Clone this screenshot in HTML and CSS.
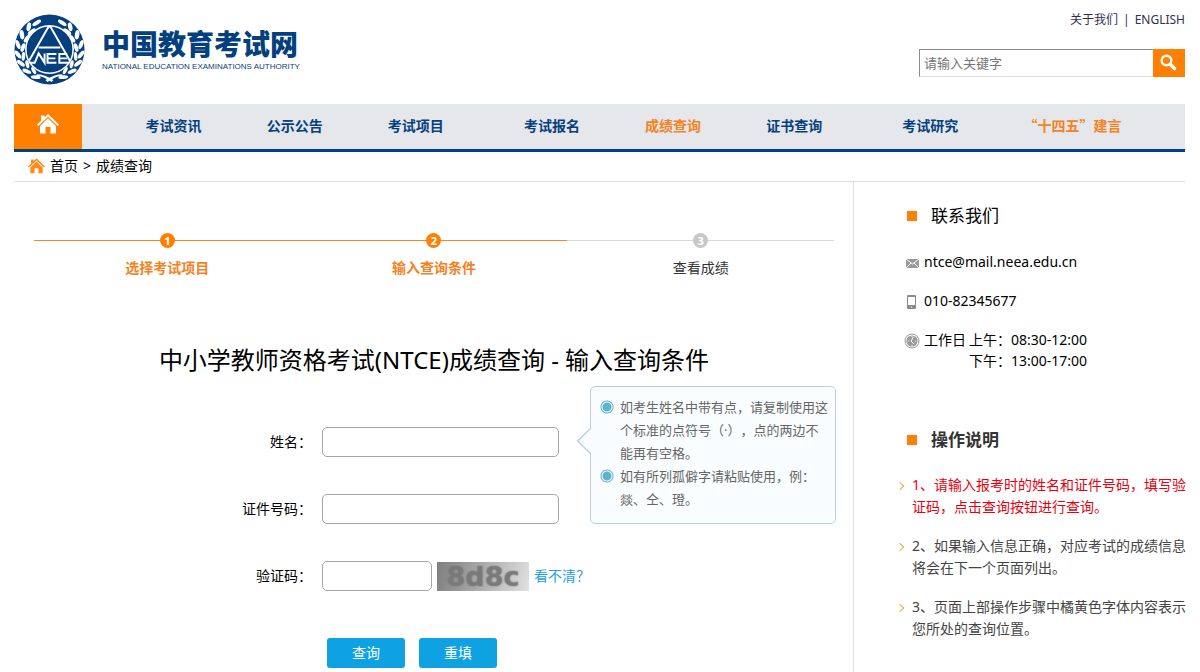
FILE: index.html
```html
<!DOCTYPE html>
<html lang="zh-CN">
<head>
<meta charset="utf-8">
<meta name="viewport" content="width=device-width, initial-scale=1">
<title>成绩查询 - 中国教育考试网</title>
<link rel="stylesheet" href="styles.css">
</head>
<body>
<header class="header">
  <a class="brand" href="#">
    <svg class="emblem" viewBox="0 0 72 72" aria-hidden="true">
      <defs>
        <g id="branch" fill="#fff">
          <ellipse cx="23" cy="9" rx="5" ry="2" transform="rotate(-32 23 9)"/>
          <ellipse cx="15" cy="13" rx="2.200" ry="4.500" transform="rotate(12 15 13)"/>
          <ellipse cx="18" cy="18" rx="4.800" ry="2" transform="rotate(-38 18 18)"/>
          <ellipse cx="8" cy="21" rx="2.300" ry="4.800" transform="rotate(-8 8 21)"/>
          <ellipse cx="13" cy="25" rx="4.500" ry="2" transform="rotate(-55 13 25)"/>
          <ellipse cx="4" cy="31" rx="2" ry="4.800" transform="rotate(-22 4 31)"/>
          <ellipse cx="9" cy="34" rx="2" ry="4.500" transform="rotate(18 9 34)"/>
          <ellipse cx="4" cy="41" rx="2" ry="4.800" transform="rotate(-38 4 41)"/>
          <ellipse cx="9.500" cy="43" rx="1.800" ry="4.500" transform="rotate(4 9.500 43)"/>
          <ellipse cx="7" cy="50" rx="2" ry="4.800" transform="rotate(-52 7 50)"/>
          <ellipse cx="13.500" cy="51" rx="1.800" ry="4.200" transform="rotate(-14 13.500 51)"/>
          <ellipse cx="13" cy="58" rx="1.900" ry="4.800" transform="rotate(-68 13 58)"/>
          <ellipse cx="20" cy="57.500" rx="1.700" ry="4" transform="rotate(-30 20 57.500)"/>
          <ellipse cx="22" cy="64" rx="1.900" ry="5" transform="rotate(-86 22 64)"/>
          <path d="M23 61Q31 61 40 67L38 69Q30 63 23 62.500Z"/>
        </g>
      </defs>
      <circle cx="36" cy="36" r="35.500" fill="#043f7e"/>
      <use href="#branch"/>
      <use href="#branch" transform="translate(72 0) scale(-1 1)"/>
      <circle cx="36" cy="36" r="24" fill="#043f7e" stroke="#fff" stroke-width="1.600"/>
      <g fill="none" stroke="#fff" stroke-width="2">
        <path d="M15 48L35 13h2l20 35M25 34h22"/>
        <path d="M16 49.500h5L25 40l6 9.500V40M43 40.500h-9v9h9M34 45h8M54 40.500H46v9h10M46 45h8"/>
      </g>
    </svg>
    <span class="brand-text">
      <span class="brand-name">中国教育考试网</span>
      <span class="brand-sub">NATIONAL EDUCATION EXAMINATIONS AUTHORITY</span>
    </span>
  </a>
  <div class="tools">
    <div class="top-links"><a href="#">关于我们</a><span>|</span><a href="#">ENGLISH</a></div>
    <form class="search">
      <input class="search-input" type="text" placeholder="请输入关键字" aria-label="请输入关键字">
      <button class="search-button" type="button" aria-label="搜索">
        <svg width="18" height="18" viewBox="0 0 18 18" fill="none" stroke="#fff"><circle cx="6.500" cy="6.500" r="4.800" stroke-width="2.400"/><path d="M10.500 10.500l4 4" stroke-width="3.600" stroke-linecap="round"/></svg>
      </button>
    </form>
  </div>
</header>

<nav class="nav">
  <a class="nav-home" href="#" aria-label="首页">
    <svg width="22" height="20" viewBox="0 0 22 20" fill="#fff"><path d="M11 0l8 7.700 3 3-1.300 1.300L11 2.800l-9.700 9.200L0 10.700l4-4V1.500h3.500v2z"/><path d="M11 4.300l8 7.700v7.500h-5.500V13h-5v6.500H3V12z"/></svg>
  </a>
  <div class="nav-items">
    <div class="nav-group"><a href="#">考试资讯</a><a href="#">公示公告</a><a href="#">考试项目</a></div>
    <div class="nav-group"><a href="#">考试报名</a><a class="current" href="#">成绩查询</a><a href="#">证书查询</a></div>
    <div class="nav-group nav-group-last"><a href="#">考试研究</a><a class="current wide" href="#">“十四五”建言</a></div>
  </div>
</nav>

<div class="crumbs">
  <svg width="17" height="16" viewBox="0 0 22 20" fill="#ff8a14" aria-hidden="true"><path d="M11 0l8 7.700 3 3-1.300 1.300L11 2.800l-9.700 9.200L0 10.700l4-4V1.500h3.500v2z"/><path d="M11 4.300l8 7.700v7.500h-5.500V13h-5v6.500H3V12z"/></svg>
  <a href="#">首页</a><span>&gt;</span><a href="#">成绩查询</a>
</div>

<div class="columns">
  <main class="main">
    <ol class="steps">
      <li class="step done"><span class="dot">1</span><span>选择考试项目</span></li>
      <li class="step done"><span class="dot">2</span><span>输入查询条件</span></li>
      <li class="step"><span class="dot">3</span><span>查看成绩</span></li>
    </ol>
    <h1 class="title">中小学教师资格考试(NTCE)成绩查询 - 输入查询条件</h1>
    <form class="form">
      <div class="row">
        <label for="name">姓名：</label>
        <div class="field">
          <input id="name" class="box" type="text">
          <div class="tip">
            <svg class="tip-arrow" width="16" height="28" viewBox="0 0 16 28" aria-hidden="true"><path d="M15 1L1.500 14 15 27" fill="#f9fdff" stroke="#bfcde2" stroke-width="1.400"/></svg>
            <ul>
              <li>如考生姓名中带有点，请复制使用这个标准的点符号（·），点的两边不能再有空格。</li>
              <li>如有所列孤僻字请粘贴使用，例：<br>燚、仝、璒。</li>
            </ul>
          </div>
        </div>
      </div>
      <div class="row">
        <label for="idno">证件号码：</label>
        <div class="field"><input id="idno" class="box" type="text"></div>
      </div>
      <div class="row">
        <label for="code">验证码：</label>
        <div class="field">
          <input id="code" class="box short" type="text">
          <span class="captcha">8d8c</span>
          <a class="refresh" href="#">看不清？</a>
        </div>
      </div>
      <div class="actions"><button class="button" type="button">查询</button><button class="button" type="reset">重填</button></div>
    </form>
  </main>

  <aside class="side">
    <h2 class="side-title">联系我们</h2>
    <ul class="contact">
      <li>
        <svg width="17" height="17" viewBox="0 0 17 17" aria-hidden="true"><path fill="#999" d="M2 5h13v9H2z"/><path d="M2 5l6.500 5L15 5M2 14l5-5M15 14l-5-5" fill="none" stroke="#fff"/></svg>
        <span>ntce@mail.neea.edu.cn</span>
      </li>
      <li>
        <svg width="17" height="17" viewBox="0 0 17 17" aria-hidden="true"><rect x="3" y="2" width="9" height="14" rx="1" fill="#8a8a8a"/><path fill="#fff" d="M4 4h7v8H4zM7 13.500h1v1H7z"/></svg>
        <span>010-82345677</span>
      </li>
      <li>
        <svg width="17" height="17" viewBox="0 0 17 17" aria-hidden="true"><circle cx="8" cy="9" r="7" fill="#fff" stroke="#999"/><circle cx="8" cy="9" r="5.600" fill="#999"/><path d="M9.500 5L7 9l3 3M4 9h1M8 4v1M8 13v1M12 9h-1" fill="none" stroke="#fff"/></svg>
        <span>工作日</span>
        <span class="hours"><span>上午：08:30-12:00</span><span>下午：13:00-17:00</span></span>
      </li>
    </ul>
    <h2 class="side-title strong">操作说明</h2>
    <ul class="notes">
      <li class="alert">1、请输入报考时的姓名和证件号码，填写验证码，点击查询按钮进行查询。</li>
      <li>2、如果输入信息正确，对应考试的成绩信息将会在下一个页面列出。</li>
      <li>3、页面上部操作步骤中橘黄色字体内容表示您所处的查询位置。</li>
    </ul>
  </aside>
</div>
</body>
</html>
```
FILE: styles.css
```css
* { box-sizing: border-box; }
body {
  margin: 0;
  padding: 0 15px 0 14px;
  background: #fff;
  color: #000;
  font: 14px/22px "Noto Sans", "Noto Sans CJK SC", sans-serif;
}
a { color: inherit; text-decoration: none; }
ul, ol { margin: 0; padding: 0; list-style: none; }
input, button { font: inherit; }
svg { display: block; flex: none; }

.header { display: flex; justify-content: space-between; height: 104px; }
.brand { display: flex; align-items: flex-start; gap: 17px; padding-top: 14px; color: #043f7e; }
.emblem { width: 71px; height: 71px; }
.brand-text { display: flex; flex-direction: column; padding-top: 13px; }
.brand-name { font-size: 28px; line-height: 34px; font-weight: 900; }
.brand-sub { font: 8px/12px "Liberation Sans", sans-serif; }
.tools { display: flex; flex-direction: column; align-items: flex-end; width: 266px; padding-top: 9px; }
.top-links { display: flex; gap: 5px; margin-bottom: 18px; color: #2e2e52; font-size: 12px; }
.search { display: flex; width: 100%; height: 28px; }
.search-input {
  flex: 1;
  min-width: 0;
  padding: 0 4px;
  border: 1px solid #ddd;
  border-top-color: #8a8a8a;
  border-left-color: #8a8a8a;
  border-right: 0;
  font-size: 13px;
}
.search-input::placeholder { color: #757575; }
.search-button { display: flex; align-items: center; justify-content: center; width: 32px; padding: 0; border: 0; background: #ff8000; }

.nav { display: flex; height: 48px; border-bottom: 3px solid #043f7e; background: #e6e7eb; }
.nav-home { display: flex; justify-content: center; width: 68px; padding-top: 10px; background: #ff8000; }
.nav-items { display: flex; flex: 1; gap: 15px; padding: 0 31px; }
.nav-group { display: flex; flex: 363; }
.nav-group-last { flex: 284; }
.nav-group a { flex: 121; text-align: center; color: #043f7e; font-family: "Noto Sans CJK SC", sans-serif; font-weight: 700; line-height: 42px; white-space: nowrap; }
.nav-group .wide { flex: 163; }
.nav-group .current { color: #f5821f; }

.crumbs { display: flex; align-items: center; gap: 5px; height: 30px; padding: 0 0 2px 14px; border-bottom: 1px solid #ddd; }

.columns { display: grid; grid-template-columns: 840fr 331fr; }
.main { padding: 51px 19px 4px 20px; border-right: 1px solid #ddd; }
.steps { display: grid; grid-template-columns: repeat(3, 1fr); }
.step {
  display: flex;
  flex-direction: column;
  align-items: center;
  gap: 9px;
  color: #333;
  background: linear-gradient(#d8d8d8, #d8d8d8) 0 7px / 100% 1px no-repeat;
}
.step.done { color: #f5821f; font-weight: 700; background-image: linear-gradient(#f5881f, #f5881f); }
.dot { width: 15px; height: 15px; border-radius: 50%; background: #c8c8c8; color: #fff; font-size: 11px; line-height: 15px; font-weight: 700; text-align: center; }
.done .dot { background: #ff8000; }
.title { margin: 65px 0 51px; font-size: 24px; line-height: 32px; font-weight: 400; text-align: center; }
.row { display: flex; align-items: center; gap: 10px; height: 30px; margin-bottom: 37px; }
.row label { width: 278px; text-align: right; }
.field { position: relative; display: flex; align-items: center; gap: 5px; }
.box { width: 237px; height: 30px; padding: 0 8px; border: 1px solid #a6a6a6; border-radius: 5px; background: #fff; }
.box.short { width: 110px; }
.captcha {
  width: 92px;
  height: 29px;
  background: linear-gradient(105deg, #7e7e7e, #a8a8a8 45%, #e2e2e2);
  color: #7a7a7acc;
  font: bold 27px/29px "DejaVu Sans", sans-serif;
  text-align: center;
  text-shadow: 0 0 2px #777;
}
.refresh { color: #1a9fe0; }
.tip {
  position: absolute;
  top: -41px;
  left: 268px;
  width: 246px;
  padding: 9px 6px 12px 9px;
  border: 1px solid #bfcde2;
  border-radius: 5px;
  background: #f9fdff;
  color: #666;
  font-size: 13px;
  line-height: 23px;
  text-spacing-trim: space-all;
}
.tip-arrow { position: absolute; top: 40px; left: -15px; }
.tip li {
  padding-left: 20px;
  background: radial-gradient(circle, #5cb3cf 0 4px, #fff 5px, #fff 5px, #5cb3cf 6px, #5cb3cf 6px, transparent 7px) 0 4px / 14px 14px no-repeat;
}
.actions { display: flex; gap: 14px; margin-top: 47px; padding-left: 293px; }
.button { width: 78px; height: 30px; padding: 0; border: 0; border-radius: 3px; background: #0fa2e3; color: #fff; }

.side { padding: 22px 0 0 50px; }
.side-title { display: flex; align-items: center; gap: 14px; margin: 0 0 23px 3px; font-size: 17px; line-height: 24px; font-weight: 400; }
.side-title::before { content: ""; width: 10px; height: 10px; background: #ff8000; }
.side-title.strong { margin-bottom: 22px; color: #333; font-weight: 700; }
.contact { display: flex; flex-direction: column; gap: 18px; margin-bottom: 57px; line-height: 21px; }
.contact li { display: flex; gap: 3px; }
.contact svg { margin-top: 3px; }
.hours { display: flex; flex-direction: column; }
.notes { display: flex; flex-direction: column; gap: 17px; margin: 0 -4px 0 -7px; color: #444; }
.notes li { display: flex; gap: 9px; }
.notes li::before { content: ""; flex: none; width: 5px; height: 5px; margin-top: 9px; border: solid #f5a34a; border-width: 1px 1px 0 0; transform: rotate(45deg); }
.notes .alert { color: #e60012; }
```
